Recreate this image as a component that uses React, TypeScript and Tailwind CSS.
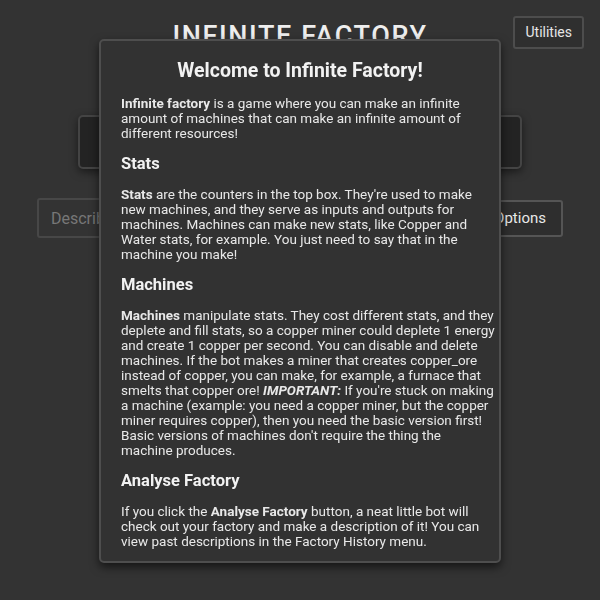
import React from 'react';

export default function App() {
  return (
    <div className="relative min-h-screen bg-[#333333] font-['Roboto',sans-serif] text-[#e8e8e8]">
      <Header />
      <div className="flex flex-col items-center">
        <div className="mt-[59px] h-[54px] w-[444px] rounded-[5px] border-2 border-[#444] bg-[#232323] shadow-[0_3px_8px_rgba(0,0,0,0.5)]" />
        <div className="mt-[29px] flex w-[526px] items-center gap-2">
          <input
            className="h-[40px] flex-1 rounded-[3px] border-2 border-[#474747] bg-transparent px-3 text-[16px] text-[#ddd] placeholder:text-[#777] outline-none"
            placeholder="Describe a machine..."
          />
          <button className="h-[37px] rounded-[3px] border-2 border-[#555] bg-[#2e2e2e] px-4 text-[15px]">
            Analyse Factory
          </button>
          <button className="h-[37px] rounded-[3px] border-2 border-[#555] bg-[#2e2e2e] pl-4 pr-[15px] text-[15px]">
            Options
          </button>
        </div>
      </div>
      <WelcomeModal />
    </div>
  );
}

function Header() {
  return (
    <div className="grid grid-cols-[1fr_auto_1fr] px-4 pt-4">
      <div />
      <h1 className="text-[27px] font-medium uppercase leading-[40px] tracking-[0.06em] text-[#eeeeee]">
        Infinite Factory
      </h1>
      <div className="flex justify-end">
        <button className="h-[33px] rounded-[3px] border-2 border-[#4d4d4d] bg-[#2f2f2f] px-[10px] text-[14px] text-[#e6e6e6]">
          Utilities
        </button>
      </div>
    </div>
  );
}

function WelcomeModal() {
  return (
    <div className="fixed inset-0 flex justify-center pt-[39px]">
      <div className="h-fit w-[402px] rounded-[5px] border-2 border-[#4e4e4e] bg-[#323232] px-5 pb-3 pt-[18px] shadow-[0_4px_10px_rgba(0,0,0,0.6)]">
        <h2 className="text-center text-[19.5px] font-bold leading-[24px] text-[#f2f2f2]">
          Welcome to Infinite Factory!
        </h2>
        <Para>
          <b>Infinite factory</b> is a game where you can make an infinite
          <br />
          amount of machines that can make an infinite amount of
          <br />
          different resources!
        </Para>
        <Heading>Stats</Heading>
        <Para>
          <b>Stats</b> are the counters in the top box. They're used to make
          <br />
          new machines, and they serve as inputs and outputs for
          <br />
          machines. Machines can make new stats, like Copper and
          <br />
          Water stats, for example. You just need to say that in the
          <br />
          machine you make!
        </Para>
        <Heading>Machines</Heading>
        <Para>
          <b>Machines</b> manipulate stats. They cost different stats, and they
          <br />
          deplete and fill stats, so a copper miner could deplete 1 energy
          <br />
          and create 1 copper per second. You can disable and delete
          <br />
          machines. If the bot makes a miner that creates copper_ore
          <br />
          instead of copper, you can make, for example, a furnace that
          <br />
          smelts that copper ore!{' '}
          <b>
            <i>IMPORTANT:</i>
          </b>{' '}
          If you're stuck on making
          <br />
          a machine (example: you need a copper miner, but the copper
          <br />
          miner requires copper), then you need the basic version first!
          <br />
          Basic versions of machines don't require the thing the
          <br />
          machine produces.
        </Para>
        <Heading>Analyse Factory</Heading>
        <Para>
          If you click the <b>Analyse Factory</b> button, a neat little bot will
          <br />
          check out your factory and make a description of it! You can
          <br />
          view past descriptions in the Factory History menu.
        </Para>
      </div>
    </div>
  );
}

function Para({ children }: { children: React.ReactNode }) {
  return <p className="mt-[13px] whitespace-nowrap text-[13.5px] leading-[15px]">{children}</p>;
}

function Heading({ children }: { children: React.ReactNode }) {
  return <h3 className="mt-[13px] text-[16.5px] font-bold leading-[20px] text-[#f2f2f2]">{children}</h3>;
}
